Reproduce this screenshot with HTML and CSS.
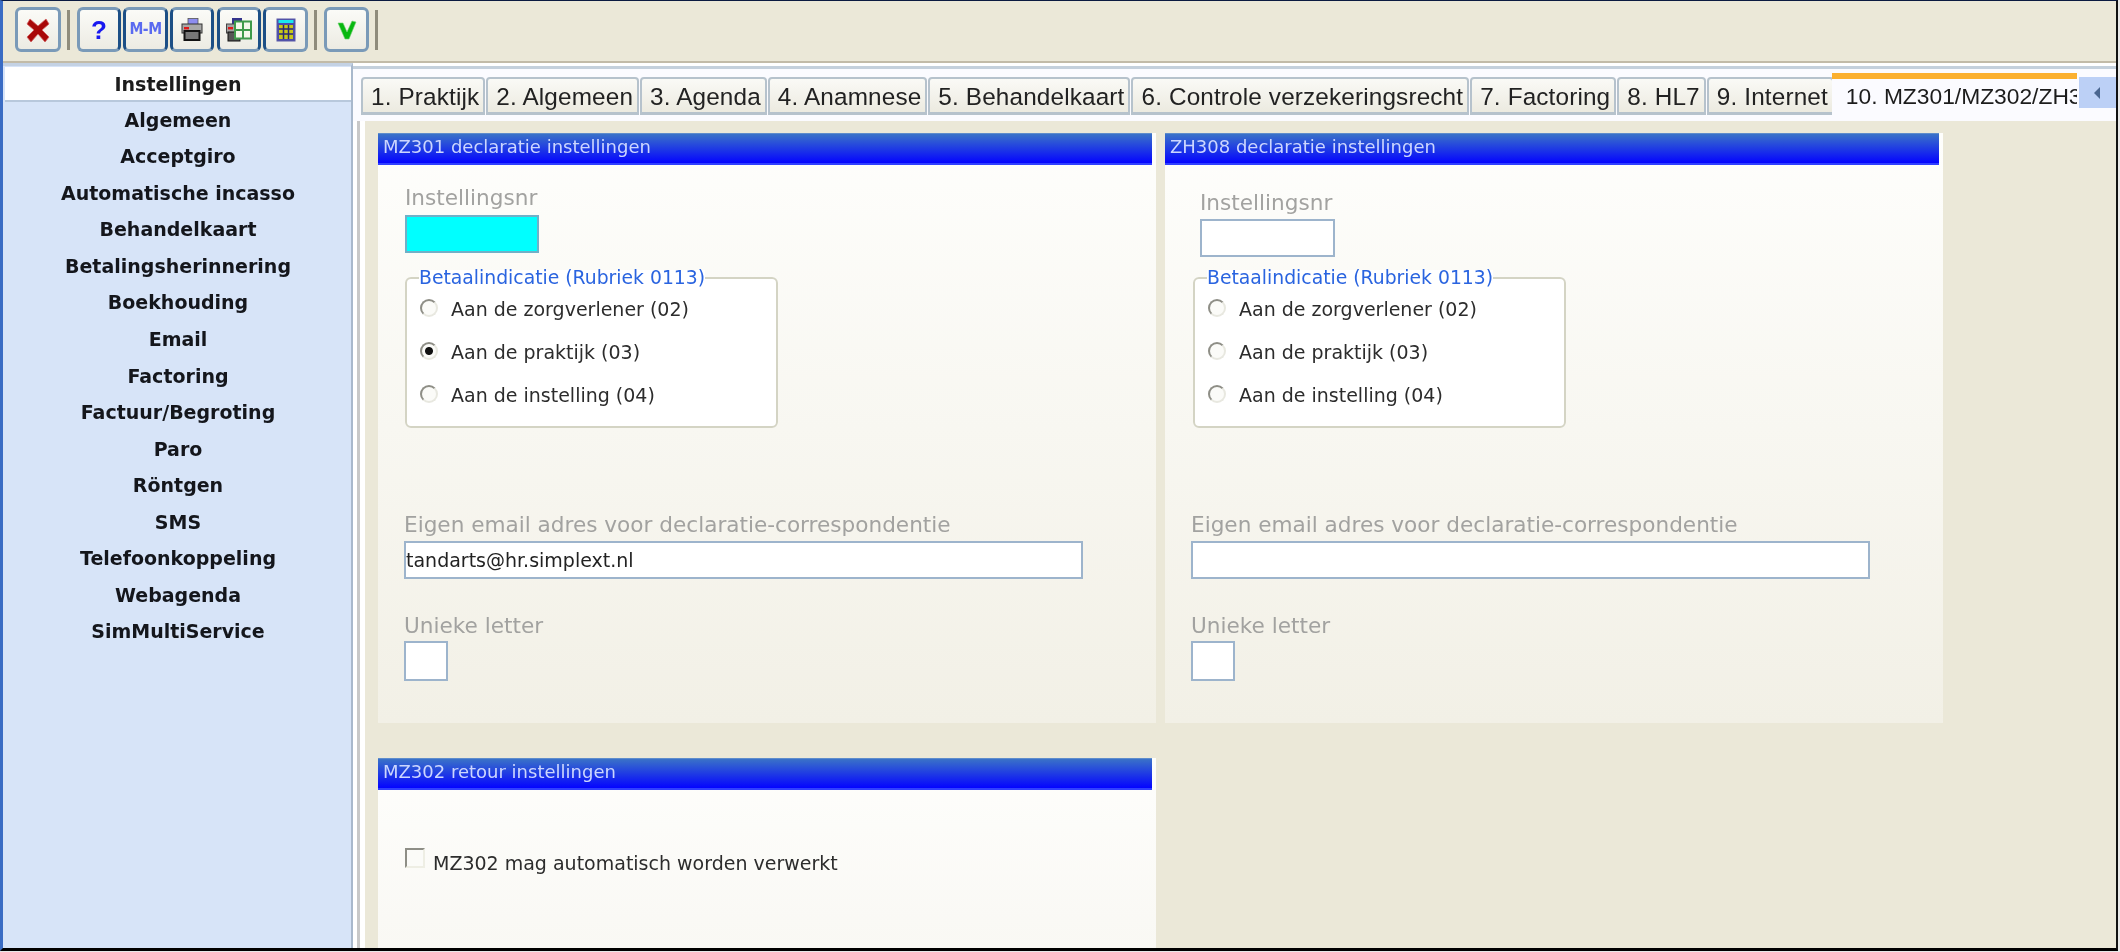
FILE: index.html
```html
<!DOCTYPE html>
<html lang="nl">
<head>
<meta charset="utf-8">
<title>Instellingen</title>
<link rel="stylesheet" href="styles.css">
</head>
<body>
<div class="app">
  <div class="toolbar">
    <button class="tool tool-close" type="button">
      <svg viewBox="0 0 24 24" width="24" height="24"><path d="M4 1 L12 8 L20 1 L23 6 L16 12 L23 19 L19 24 L12 16 L5 24 L1 19 L8 12 L1 6 Z" fill="#a80808" stroke="#d06060" stroke-width=".8"/></svg>
    </button>
    <span class="sep"></span>
    <button class="tool tool-a" type="button"><span class="help">?</span></button>
    <button class="tool tool-b" type="button"><span class="mm">M-M</span></button>
    <button class="tool tool-c" type="button">
      <svg viewBox="0 0 22 23" width="22" height="23"><rect x="7" y="0.500" width="10" height="6" fill="#8d8df0" stroke="#555" stroke-width=".8"/><rect x="1" y="6" width="20" height="9" fill="#a8a8a8" stroke="#333"/><rect x="3" y="9" width="5" height="2.400" fill="#e01818"/><rect x="3.500" y="13" width="15" height="9" fill="#777" stroke="#111" stroke-width="2"/></svg>
    </button>
    <button class="tool tool-d" type="button">
      <svg viewBox="0 0 26 24" width="26" height="24"><rect x="6" y="0" width="10" height="6" fill="#34348c"/><rect x="0.500" y="6" width="14" height="9" fill="#a4a4a4" stroke="#444"/><rect x="2" y="9" width="5" height="2.400" fill="#e01818"/><rect x="2" y="14" width="12" height="9" fill="#555" stroke="#111"/><rect x="9" y="3.500" width="16" height="17" fill="#f4f8ea" stroke="#3f9a4a" stroke-width="2"/><path d="M17 3.500V20.500M9 12H25" stroke="#3f9a4a" stroke-width="2"/></svg>
    </button>
    <button class="tool tool-e" type="button">
      <svg viewBox="0 0 20 24" width="20" height="24"><rect x="1" y="1" width="18" height="22" fill="#4c4ca8" stroke="#5858a8"/><rect x="2.500" y="2" width="15" height="3" fill="#18e8f0"/><rect x="3" y="7" width="14" height="14" fill="#c8c818"/><path d="M7.500 7V21M12.500 7V21M3 11H17M3 16H17" stroke="#282878" stroke-width="1.500"/></svg>
    </button>
    <span class="sep"></span>
    <button class="tool tool-ok" type="button">
      <svg viewBox="0 0 20 20" width="20" height="20"><path d="M1 3 L6 3 L10 12 L15 1 L19 2 L12 19 L8 19 Z" fill="#08b810" stroke="#70d070" stroke-width=".6"/></svg>
    </button>
    <span class="sep"></span>
  </div>
  <div class="main">
    <nav class="sidebar">
      <a class="side-item is-selected">Instellingen</a>
      <a class="side-item">Algemeen</a>
      <a class="side-item">Acceptgiro</a>
      <a class="side-item">Automatische incasso</a>
      <a class="side-item">Behandelkaart</a>
      <a class="side-item">Betalingsherinnering</a>
      <a class="side-item">Boekhouding</a>
      <a class="side-item">Email</a>
      <a class="side-item">Factoring</a>
      <a class="side-item">Factuur/Begroting</a>
      <a class="side-item">Paro</a>
      <a class="side-item">Röntgen</a>
      <a class="side-item">SMS</a>
      <a class="side-item">Telefoonkoppeling</a>
      <a class="side-item">Webagenda</a>
      <a class="side-item">SimMultiService</a>
    </nav>
    <div class="content">
      <div class="tabstrip">
        <span class="tab">1. Praktijk</span>
        <span class="tab">2. Algemeen</span>
        <span class="tab">3. Agenda</span>
        <span class="tab">4. Anamnese</span>
        <span class="tab">5. Behandelkaart</span>
        <span class="tab">6. Controle verzekeringsrecht</span>
        <span class="tab">7. Factoring</span>
        <span class="tab">8. HL7</span>
        <span class="tab">9. Internet</span>
        <span class="tab tab-active">10. MZ301/MZ302/ZH308</span>
        <span class="tab-arrow"><svg viewBox="0 0 8 12" width="8" height="12"><path d="M7 0V12L1 6Z" fill="#4a6690"/></svg></span>
      </div>
      <div class="pane">
        <section class="panel">
          <h2 class="panel-title">MZ301 declaratie instellingen</h2>
          <div class="panel-body">
            <div class="field-nr">
              <label class="lbl">Instellingsnr</label>
              <input class="inp inp-nr inp-cyan" type="text">
            </div>
            <fieldset class="group">
              <legend>Betaalindicatie (Rubriek 0113)</legend>
              <label class="radio"><input type="radio" name="a">Aan de zorgverlener (02)</label>
              <label class="radio"><input type="radio" name="a" checked>Aan de praktijk (03)</label>
              <label class="radio"><input type="radio" name="a">Aan de instelling (04)</label>
            </fieldset>
            <label class="lbl lbl-email">Eigen email adres voor declaratie-correspondentie</label>
            <input class="inp inp-email" type="text" value="tandarts@hr.simplext.nl">
            <label class="lbl lbl-letter">Unieke letter</label>
            <input class="inp inp-letter" type="text">
          </div>
        </section>
        <section class="panel panel-alt">
          <h2 class="panel-title">ZH308 declaratie instellingen</h2>
          <div class="panel-body">
            <div class="field-nr">
              <label class="lbl">Instellingsnr</label>
              <input class="inp inp-nr" type="text">
            </div>
            <fieldset class="group">
              <legend>Betaalindicatie (Rubriek 0113)</legend>
              <label class="radio"><input type="radio" name="b">Aan de zorgverlener (02)</label>
              <label class="radio"><input type="radio" name="b">Aan de praktijk (03)</label>
              <label class="radio"><input type="radio" name="b">Aan de instelling (04)</label>
            </fieldset>
            <label class="lbl lbl-email">Eigen email adres voor declaratie-correspondentie</label>
            <input class="inp inp-email" type="text">
            <label class="lbl lbl-letter">Unieke letter</label>
            <input class="inp inp-letter" type="text">
          </div>
        </section>
        <section class="panel panel-wide">
          <h2 class="panel-title">MZ302 retour instellingen</h2>
          <div class="panel-body panel-body-check">
            <label class="check"><input type="checkbox">MZ302 mag automatisch worden verwerkt</label>
          </div>
        </section>
      </div>
    </div>
  </div>
</div>
</body>
</html>
```
FILE: styles.css
```css
* { box-sizing: border-box; }
html, body { margin: 0; height: 952px; overflow: hidden; background: #e8e8e8; }
body { font-family: "DejaVu Sans", sans-serif; }

.app {
  width: 2118px;
  height: 951px;
  display: flex;
  flex-direction: column;
  border-top: 1px solid #0a1a40;
  box-shadow: inset 0 2px 0 #2a5cc0;
  border-left: 3px solid #3a6cc4;
  border-right: 2px solid #111;
  border-bottom: 3px solid #000;
  overflow: hidden;
  filter: blur(0.45px);
}

.toolbar {
  flex: none;
  height: 62px;
  padding: 6px 0 0 12px;
  display: flex;
  align-items: flex-start;
  background: #ebe8d8;
  border-bottom: 2px solid #c2bba8;
}
.tool {
  width: 44px;
  height: 45px;
  padding: 0;
  margin-right: 2px;
  display: flex;
  align-items: center;
  justify-content: center;
  border: 3px solid #7a9ab8;
  border-radius: 6px;
  background: linear-gradient(#fbfbf7, #ecebe3);
  font-family: "DejaVu Sans", sans-serif;
}
.tool-close { width: 46px; margin-right: 0; }
.tool-ok { width: 45px; margin-right: 0; }
.tool-a { border-right-color: #1c4f86; }
.tool-b, .tool-c, .tool-d { border-left-color: #1c4f86; border-right-color: #1c4f86; }
.tool-b { width: 45px; }
.tool-c { margin-right: 3px; }
.tool-d { margin-right: 2px; }
.tool-e { width: 45px; border-left-color: #1c4f86; margin-right: 0; }
.sep {
  width: 3px;
  height: 40px;
  margin: 3px 7px 0 6px;
  background: #8f8c7c;
}
.help { font: 700 26px/1 "Liberation Sans", sans-serif; color: #1818f0; }
.mm { font: 700 15.500px/1 "DejaVu Sans Condensed", "DejaVu Sans", sans-serif; color: #5a6af0; letter-spacing: -.5px; white-space: nowrap; }

.main { flex: 1; min-height: 0; display: flex; }

.sidebar {
  flex: none;
  width: 350px;
  padding: 1px 0 0 2px;
  background: #d7e4f8;
  border-top: 3px solid #c4d2e4;
  border-right: 2px solid #a8b8cc;
  display: flex;
  flex-direction: column;
}
.side-item {
  height: 36.550px;
  line-height: 36.500px;
  text-align: center;
  font-weight: 700;
  font-size: 19px;
  color: #14161c;
  flex: none;
}
.is-selected {
  height: 33px;
  line-height: 34px;
  margin-bottom: 1.750px;
  background: #fff;
  color: #1c1c1c;
  box-shadow: 0 2px 0 #b8c8dc;
}

.content {
  flex: 1;
  min-width: 0;
  display: flex;
  flex-direction: column;
  background: linear-gradient(90deg, #fff 0 4px, #c8c8c8 4px 7px, #fff 7px 12px);
}
.tabstrip {
  flex: none;
  height: 58px;
  padding: 14px 0 0 8px;
  display: flex;
  align-items: flex-start;
  gap: 1px;
  background: linear-gradient(#fff 0 3px, #c4d0dc 3px 6px, #fbfbff 6px);
  overflow: hidden;
}
.tab {
  flex: none;
  height: 38px;
  padding: 2px 4px 0 8px;
  font: 24.300px/32px "Liberation Sans", sans-serif;
  letter-spacing: .15px;
  color: #222;
  white-space: nowrap;
  background: linear-gradient(#fafaf6, #eceae0);
  border: 2px solid #b6c2cc;
  border-bottom-width: 3px;
  border-radius: 4px 4px 0 0;
}
.tab-active {
  width: 245px;
  height: 47px;
  margin: -4px 0 0 -3px;
  padding: 1px 0 0 14px;
  overflow: hidden;
  font-size: 22.800px;
  letter-spacing: 0;
  background: #fbfbff;
  border: 0;
  border-top: 6px solid #fbb030;
  border-radius: 0;
  color: #1c1c1c;
}
.tab-arrow {
  flex: none;
  width: 42px;
  height: 31px;
  margin-left: 1px;
  display: flex;
  align-items: center;
  justify-content: center;
  padding-right: 6px;
  background: #bcd0f6;
}

.pane {
  flex: 1;
  min-height: 0;
  margin-left: 12px;
  padding: 12px 0 0 13px;
  background: #ebe8d8;
  overflow: hidden;
  display: grid;
  grid-template-columns: 778px 778px;
  grid-template-rows: 590px 230px;
  column-gap: 9px;
  row-gap: 35px;
  align-content: start;
}
.panel {
  background: linear-gradient(#fefefc, #f2f0e6);
}
.panel-wide { background: linear-gradient(#fefefc, #f8f7f2); }
.panel-title {
  margin: 0;
  width: 774px;
  height: 32px;
  padding: 0 5px;
  font-size: 18px;
  font-weight: 400;
  line-height: 25px;
  color: #ccd6ff;
  background: linear-gradient(#3a72c8, #0404ff);
  border-top: 1px solid #5e8ccc;
  border-bottom: 2px solid #3040ff;
}
.panel-body { padding: 20px 0 0 26px; }
.field-nr { margin-left: 1px; }
.panel-alt .field-nr { margin-left: 9px; padding-top: 5px; }
.lbl {
  display: block;
  font-size: 21.600px;
  line-height: 26px;
  color: #a2a2a0;
}
.inp {
  display: block;
  padding: 0;
  font: 19px "DejaVu Sans", sans-serif;
  color: #222;
  background: #fff;
  border: 2px solid #9db4cc;
  outline: 0;
}
.inp-nr { width: 134px; height: 38px; margin-top: 4px; }
.panel-alt .inp-nr { width: 135px; height: 38px; margin-top: 3px; }
.inp-cyan { background: #00ffff; border-color: #70b0c8; }
.group {
  width: 373px;
  margin: 17px 0 0 1px;
  padding: 0 12px 11px 13px;
  border: 2px solid #d4d4c4;
  border-radius: 6px;
  background: #fff;
}
.panel-alt .group { margin: 13px 0 0 2px; }
.group legend {
  margin-left: -1px;
  padding: 0;
  font-size: 18.800px;
  line-height: 16px;
  color: #2a64e0;
  background: #fff;
}
.radio {
  height: 43px;
  padding-top: 3px;
  display: flex;
  align-items: center;
  gap: 13px;
  font-size: 19px;
  color: #2c2c2c;
}
.radio input, .check input {
  appearance: none;
  margin: 0;
  flex: none;
  background: #fbfbf8;
}
.radio input {
  width: 18px;
  height: 18px;
  margin-top: -3px;
  border-radius: 50%;
  border: 2px solid #e8e8e0;
  border-top-color: #8e8e86;
  border-left-color: #8e8e86;
}
.radio input:checked {
  background: radial-gradient(circle, #111 0 3.500px, #fbfbf8 4.500px);
}
.lbl-email { margin-top: 84px; }
.inp-email { width: 679px; height: 38px; margin-top: 3px; }
.lbl-letter { margin-top: 34px; }
.inp-letter { width: 44px; height: 40px; margin-top: 2px; }
.panel-body-check { padding: 58px 0 0 27px; }
.check {
  display: flex;
  align-items: flex-start;
  gap: 8px;
  font-size: 19px;
  line-height: 30px;
  color: #2c2c2c;
}
.check input {
  width: 20px;
  height: 20px;
  border: 2px solid #eeeee4;
  border-top-color: #8e8e86;
  border-left-color: #8e8e86;
}
```
